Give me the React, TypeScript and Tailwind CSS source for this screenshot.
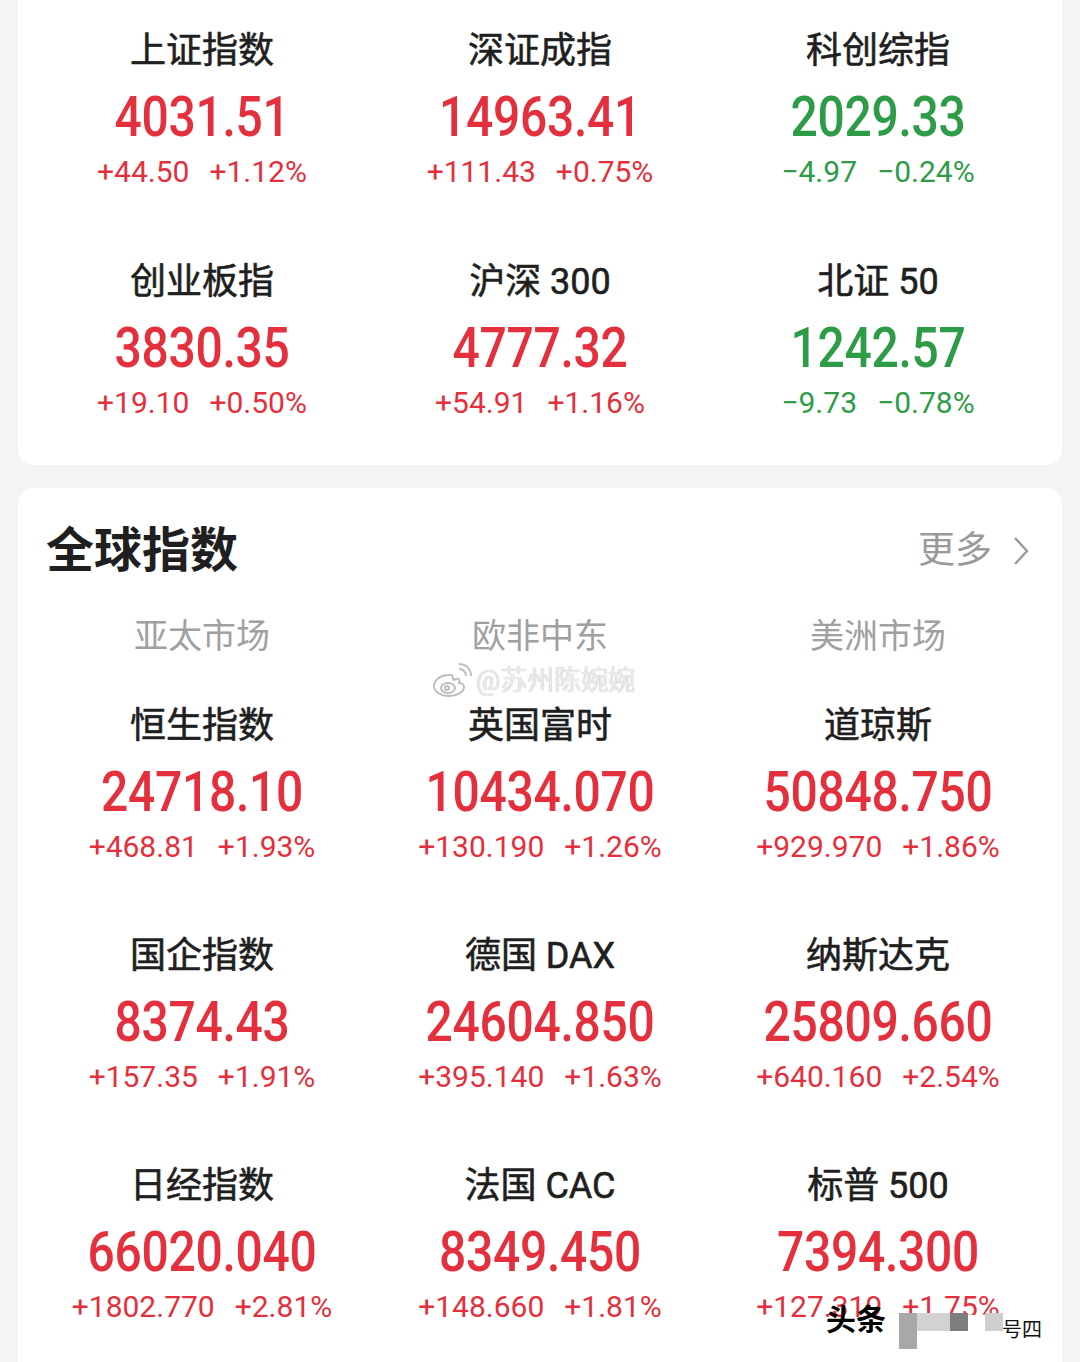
import React from "react";

type Quote = { name: string; price: string; change: string; pct: string; up: boolean };

const domestic: Quote[] = [
  { name: "上证指数", price: "4031.51", change: "+44.50", pct: "+1.12%", up: true },
  { name: "深证成指", price: "14963.41", change: "+111.43", pct: "+0.75%", up: true },
  { name: "科创综指", price: "2029.33", change: "−4.97", pct: "−0.24%", up: false },
  { name: "创业板指", price: "3830.35", change: "+19.10", pct: "+0.50%", up: true },
  { name: "沪深 300", price: "4777.32", change: "+54.91", pct: "+1.16%", up: true },
  { name: "北证 50", price: "1242.57", change: "−9.73", pct: "−0.78%", up: false },
];

const global: Quote[] = [
  { name: "恒生指数", price: "24718.10", change: "+468.81", pct: "+1.93%", up: true },
  { name: "英国富时", price: "10434.070", change: "+130.190", pct: "+1.26%", up: true },
  { name: "道琼斯", price: "50848.750", change: "+929.970", pct: "+1.86%", up: true },
  { name: "国企指数", price: "8374.43", change: "+157.35", pct: "+1.91%", up: true },
  { name: "德国 DAX", price: "24604.850", change: "+395.140", pct: "+1.63%", up: true },
  { name: "纳斯达克", price: "25809.660", change: "+640.160", pct: "+2.54%", up: true },
  { name: "日经指数", price: "66020.040", change: "+1802.770", pct: "+2.81%", up: true },
  { name: "法国 CAC", price: "8349.450", change: "+148.660", pct: "+1.81%", up: true },
  { name: "标普 500", price: "7394.300", change: "+127.319", pct: "+1.75%", up: true },
];

const cjk = "font-['Roboto','Noto_Sans_CJK_SC',sans-serif]";

function Cell({ q }: { q: Quote }) {
  const color = q.up ? "text-[#e3303c]" : "text-[#2e9c47]";
  return (
    <div className="flex h-[161px] flex-col items-center">
      <div className={`${cjk} h-[44px] text-[36px] leading-[44px] font-normal text-[#1f1f1f] [-webkit-text-stroke:0.6px_#1f1f1f]`}>
        {q.name}
      </div>
      <div
        className={`mt-[16px] h-[56px] scale-y-[1.16] font-['Roboto',sans-serif] text-[48px] leading-[56px] font-medium tracking-[-0.3px] ${color}`}
      >
        {q.price}
      </div>
      <div className={`mt-[9px] flex h-[36px] gap-[20px] font-['Roboto',sans-serif] text-[30px] leading-[36px] ${color}`}>
        <span>{q.change}</span>
        <span>{q.pct}</span>
      </div>
    </div>
  );
}

function WeiboMark() {
  return (
    <div className="pointer-events-none absolute top-[663px] left-[432px] flex items-center gap-[4px]">
      <svg width="40" height="36" viewBox="0 0 40 36" fill="none" stroke="#bdbdbd" strokeWidth="2">
        <path d="M16 12c-7 0-14 5-14 11 0 6 7 10 15 10s15-4 15-9c0-3-3-4-5-4 1-3 0-5-3-4-2 1-3 1-3 0 0-4-2-5-5-4z" />
        <ellipse cx="16" cy="25" rx="7" ry="5" />
        <circle cx="15" cy="25" r="2" />
        <path d="M27 6c4 0 7 3 7 7" />
        <path d="M27 1c7 0 12 5 12 12" />
      </svg>
      <span className={`${cjk} text-[27px] leading-[36px] text-[#ececec] [text-shadow:0_0_1px_#a8a8a8]`}>
        @苏州陈婉婉
      </span>
    </div>
  );
}

function ToutiaoMark() {
  return (
    <div className="pointer-events-none absolute top-[1300px] left-[820px] h-[62px] w-[242px]">
      <div className="absolute top-[15px] left-[80px] h-[47px] w-[162px] bg-white" />
      <div className="absolute top-[30px] left-[0px] h-[32px] w-[80px] bg-white/90" />
      <span className={`${cjk} absolute top-[2px] left-[6px] text-[30px] leading-[36px] font-bold text-black`}>头条</span>
      <div className="absolute top-[13px] left-[79px] h-[36px] w-[18px] bg-[#a8a8a8]" />
      <div className="absolute top-[13px] left-[97px] h-[18px] w-[33px] bg-[#d2d2d2]" />
      <div className="absolute top-[13px] left-[130px] h-[18px] w-[18px] bg-[#7d7d7d]" />
      <div className="absolute top-[13px] left-[165px] h-[18px] w-[18px] bg-[#cfcfcf]" />
      <span className={`${cjk} absolute top-[18px] left-[182px] text-[20px] leading-[24px] text-[#111]`}>号四</span>
    </div>
  );
}

export default function App() {
  return (
    <div className="relative h-[1362px] w-[1080px] overflow-hidden bg-[#f4f4f4] px-[18px]">
      <div className="-mt-[16px] rounded-[16px] bg-white px-[15px] pt-[45px] pb-[44px]">
        <div className="grid grid-cols-3 gap-y-[70px]">
          {domestic.map((q) => (
            <Cell key={q.name} q={q} />
          ))}
        </div>
      </div>

      <div className="mt-[23px] rounded-[16px] bg-white px-[15px] pt-[35px] pb-[60px]">
        <div className="flex h-[56px] items-center justify-between pr-[17px] pl-[13px]">
          <span className={`${cjk} text-[48px] leading-[56px] font-bold text-[#1f1f1f]`}>全球指数</span>
          <span className={`${cjk} flex items-center gap-[20px] text-[37px] text-[#9a9a9a]`}>
            更多
            <svg width="18" height="32" viewBox="0 0 18 32" fill="none" stroke="#9a9a9a" strokeWidth="2.4">
              <path d="M3 3l12 13L3 29" />
            </svg>
          </span>
        </div>
        <div className="mt-[37px] grid h-[40px] grid-cols-3">
          {["亚太市场", "欧非中东", "美洲市场"].map((t) => (
            <div key={t} className={`${cjk} text-center text-[34px] leading-[40px] text-[#a0a0a0]`}>
              {t}
            </div>
          ))}
        </div>
        <div className="mt-[48px] grid grid-cols-3 gap-y-[69px]">
          {global.map((q) => (
            <Cell key={q.name} q={q} />
          ))}
        </div>
      </div>

      <WeiboMark />
      <ToutiaoMark />
    </div>
  );
}
